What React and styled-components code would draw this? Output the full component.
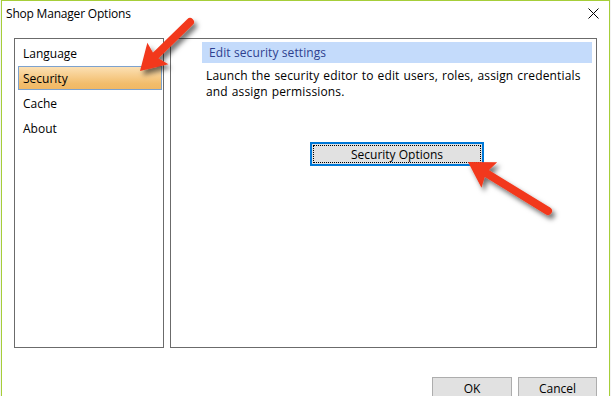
import React from "react";
import styled, { createGlobalStyle } from "styled-components";

const Global = createGlobalStyle`
  html, body { margin: 0; padding: 0; background: #ffffff; overflow: hidden; }
  body { font-family: "Open Sans", "Noto Sans", sans-serif; font-size: 12px; color: #000; }
`;

const Page = styled.div`
  position: relative;
  width: 611px;
  height: 396px;
  overflow: hidden;
  padding-left: 1px;
  box-sizing: border-box;
  background: #f3f3f3;
`;

const Window = styled.div`
  width: 609px;
  height: 396px;
  overflow: hidden;
  box-sizing: border-box;
  border: 1px solid #a6ce39;
  border-bottom: none;
  background: #ffffff;
  display: flex;
  flex-direction: column;
`;

const TitleBar = styled.div`
  height: 29px;
  flex-shrink: 0;
  display: flex;
  align-items: center;
  justify-content: space-between;
  padding: 0 10px 0 4px;
`;

const Title = styled.span`
  font-size: 12px;
  letter-spacing: -0.2px;
  margin-top: -5px;
`;

const CloseIcon = styled.svg`
  margin-top: -5px;
  margin-right: 0px;
`;

const Body = styled.div`
  display: flex;
  gap: 6px;
  padding: 8px 12px 0 12px;
`;

const ListPanel = styled.div`
  width: 150px;
  height: 310px;
  box-sizing: border-box;
  border: 1px solid #6b6b6b;
  padding: 2px 1px 0 3px;
  display: flex;
  flex-direction: column;
  gap: 1px;
`;

const Item = styled.div`
  height: 24px;
  box-sizing: border-box;
  display: flex;
  align-items: center;
  padding-left: 4px;
  border: 1px solid ${(p) => (p.$selected ? "#7da2ce" : "transparent")};
  background: ${(p) =>
    p.$selected ? "linear-gradient(#fce0b3, #f2bd6c 75%, #f0b865)" : "transparent"};
`;

const ContentPanel = styled.div`
  width: 427px;
  height: 310px;
  box-sizing: border-box;
  border: 1px solid #6b6b6b;
  padding: 3px 4px 0 31px;
  display: flex;
  flex-direction: column;
`;

const Header = styled.div`
  height: 21px;
  background: #c4dbfb;
  color: #2e3f8f;
  display: flex;
  align-items: center;
  padding-left: 7px;
  letter-spacing: 0.1px;
`;

const Description = styled.p`
  margin: 5px 0 0 4px;
  line-height: 16px;
  width: 385px;
  letter-spacing: 0.15px;
  word-spacing: 0.7px;
`;

const ActionRow = styled.div`
  display: flex;
  justify-content: center;
  margin-top: 42px;
`;

const FocusButton = styled.button`
  width: 174px;
  height: 24px;
  box-sizing: border-box;
  border: 2px solid #0078d7;
  background: #e1e1e1;
  padding: 1px;
  font: inherit;
  color: #000;
  display: flex;
`;

const FocusRing = styled.span`
  flex: 1;
  border: 1px dotted #000;
  display: flex;
  align-items: center;
  justify-content: center;
`;

const Footer = styled.div`
  display: flex;
  justify-content: flex-end;
  gap: 6px;
  padding: 29px 12px 0 0;
`;

const DialogButton = styled.button`
  width: ${(p) => p.$w}px;
  height: 23px;
  flex-shrink: 0;
  box-sizing: border-box;
  border: 1px solid #adadad;
  background: #e1e1e1;
  font: inherit;
  color: #000;
  padding: 0;
`;

const Overlay = styled.svg`
  position: absolute;
  left: 0;
  top: 0;
  pointer-events: none;
`;

function Arrow({ x1, y1, x2, y2 }) {
  const dx = x2 - x1;
  const dy = y2 - y1;
  const len = Math.hypot(dx, dy);
  const ux = dx / len;
  const uy = dy / len;
  const px = -uy;
  const py = ux;
  const headLen = 25;
  const headW = 15;
  const bx = x2 - ux * headLen;
  const by = y2 - uy * headLen;
  const head = `${x2},${y2} ${bx + px * headW},${by + py * headW} ${bx + ux * 4},${by + uy * 4} ${bx - px * headW},${by - py * headW}`;
  return (
    <g filter="url(#shadow)">
      <line x1={x1} y1={y1} x2={bx + ux * 6} y2={by + uy * 6} stroke="#f2381c" strokeWidth="8" strokeLinecap="round" />
      <polygon points={head} fill="#f2381c" />
    </g>
  );
}

export default function App() {
  const items = ["Language", "Security", "Cache", "About"];
  return (
    <Page>
      <Global />
      <Window>
        <TitleBar>
          <Title>Shop Manager Options</Title>
          <CloseIcon width="11" height="11" viewBox="0 0 11 11">
            <path d="M0.5 0.5 L10.5 10.5 M10.5 0.5 L0.5 10.5" stroke="#000" strokeWidth="1" fill="none" />
          </CloseIcon>
        </TitleBar>
        <Body>
          <ListPanel>
            {items.map((it) => (
              <Item key={it} $selected={it === "Security"}>
                {it}
              </Item>
            ))}
          </ListPanel>
          <ContentPanel>
            <Header>Edit security settings</Header>
            <Description>
              Launch the security editor to edit users, roles, assign credentials and assign permissions.
            </Description>
            <ActionRow>
              <FocusButton>
                <FocusRing>Security Options</FocusRing>
              </FocusButton>
            </ActionRow>
          </ContentPanel>
        </Body>
        <Footer>
          <DialogButton $w={80}>OK</DialogButton>
          <DialogButton $w={79}>Cancel</DialogButton>
        </Footer>
      </Window>
      <Overlay width="611" height="396" viewBox="0 0 611 396">
        <defs>
          <filter id="shadow" x="-30%" y="-30%" width="160%" height="160%">
            <feDropShadow dx="3" dy="4" stdDeviation="2.5" floodColor="#000" floodOpacity="0.55" />
          </filter>
        </defs>
        <Arrow x1={190} y1={22} x2={140} y2={71} />
        <Arrow x1={548} y1={211} x2={468} y2={162} />
      </Overlay>
    </Page>
  );
}
